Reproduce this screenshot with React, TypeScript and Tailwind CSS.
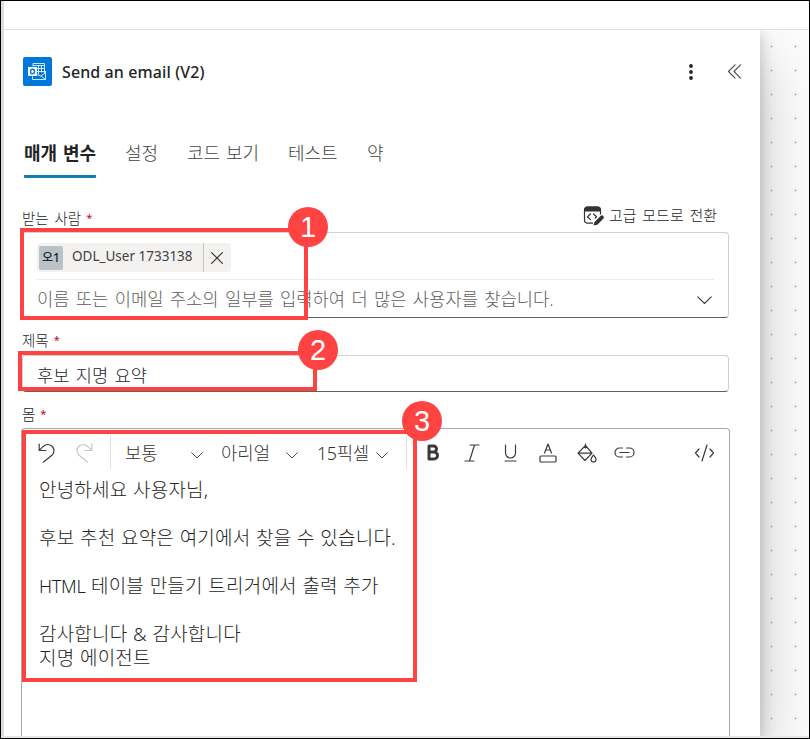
import type { ReactNode } from "react";

const FONT = "font-['Noto_Sans','Noto_Sans_CJK_KR',sans-serif]";

function Chevron({ className = "" }: { className?: string }) {
  return (
    <svg className={className} viewBox="0 0 14 8" fill="none" stroke="#424242" strokeWidth="1.1" strokeLinecap="round" strokeLinejoin="round">
      <path d="M.7.8 7 7 13.3.8" />
    </svg>
  );
}

function Label({ children, className = "" }: { children: ReactNode; className?: string }) {
  return (
    <div className={`flex items-center whitespace-nowrap text-[14.5px] font-light leading-5 text-[#242424] [word-spacing:2px] ${className}`}>
      {children}
      <span className="ml-[5px] text-[11px] font-normal text-[#b10e1c]">*</span>
    </div>
  );
}

function Marker({ n, box, badge }: { n: number; box: string; badge: string }) {
  return (
    <>
      <div className={`absolute z-20 border-4 border-[#ff4343] ${box}`} />
      <div className={`absolute z-20 flex size-10 items-center justify-center rounded-full bg-[#ff4343] font-['Liberation_Sans',sans-serif] text-[29px] leading-none text-white ${badge}`}>
        {n}
      </div>
    </>
  );
}

function OutlookIcon() {
  return (
    <svg className="size-[29px] shrink-0" viewBox="0 0 29 29" fill="none">
      <rect width="29" height="29" rx="2" fill="#0078d9" />
      <g stroke="#fff" strokeWidth=".8">
        <path d="M10 9.500v-3h11.500v10M10 8.500h11.500M14 11.500h7.500M14 14.500h7.500M15.500 8.500v9M18.500 8.500v7M9.500 19.500v3h13V14.500M21.500 14.500h1.500M14 17.500l4 1.500 4.500-3.500M18 19l4.500 3.500" />
      </g>
      <rect x="5" y="10" width="9" height="9" fill="#fff" />
      <ellipse cx="9.500" cy="14.500" rx="2" ry="2.200" stroke="#0078d9" strokeWidth="1.400" />
    </svg>
  );
}

function SwitchIcon() {
  return (
    <svg className="h-5 w-[22px]" viewBox="0 0 22 20" fill="none">
      <path d="M10 17.200H4.500A3 3 0 0 1 1.500 14.200V4A3 3 0 0 1 4.500 1h10a3 3 0 0 1 3 3v4.500" stroke="#333" strokeWidth="1.200" />
      <path d="M1 5.500V4A3.500 3.500 0 0 1 4.500.500h10A3.500 3.500 0 0 1 18 4v1.500z" fill="#333" />
      <path d="m7.500 8-3 2.800 3 2.800M10.500 8l3 2.800-1.200 1.200" stroke="#333" strokeWidth="1.200" strokeLinecap="round" strokeLinejoin="round" />
      <path d="m10.500 19.500 1-3.500 6-6a1.900 1.900 0 0 1 2.800 2.700l-6 6z" fill="#333" />
    </svg>
  );
}

const I = { fill: "none", stroke: "#3b3a39", strokeWidth: 1.2, strokeLinecap: "round", strokeLinejoin: "round" } as const;

function Toolbar() {
  return (
    <div className="flex h-[47px] items-center text-[17.8px] font-light text-[#323130]">
      <svg className="ml-4 h-5 w-[18px]" viewBox="0 0 18 20" {...I}>
        <path d="M1.200 1v6.500H8M1.500 7.200 5.500 3.200a6.200 6.200 0 0 1 9 8.500L5.500 19" />
      </svg>
      <svg className="ml-[19px] h-5 w-[18px]" viewBox="0 0 18 20" {...I} stroke="#c8c6c4">
        <path d="M16.800 1v6.500H10M16.500 7.200 12.500 3.200a6.200 6.200 0 0 0-9 8.500L12.500 19" />
      </svg>
      <div className="ml-[17px] h-[33px] w-px bg-[#e1dfdd]" />
      <span className="ml-[14px] mt-[2px] w-[66px]">보통</span>
      <Chevron className="mt-[5px] w-3" />
      <span className="ml-[18px] mt-[2px] w-[65px] whitespace-nowrap">아리얼</span>
      <Chevron className="mt-[5px] w-3" />
      <span className="ml-[19px] mt-[2px] w-[59px] whitespace-nowrap tracking-[-0.3px]">15픽셀</span>
      <Chevron className="mt-[5px] w-3" />
      <div className="ml-[18px] h-[33px] w-px bg-[#e1dfdd]" />
      <svg className="ml-[20px] h-[17px] w-[13px]" viewBox="0 0 13 17" {...I} strokeWidth={3}>
        <path d="M2 2h4.500a3 3 0 0 1 0 6H2zM2 8h5a3.500 3.500 0 0 1 0 7H2z" />
      </svg>
      <svg className="ml-[24px] h-[18px] w-4" viewBox="0 0 16 18" {...I}>
        <path d="M6 1h9M1 17h9M10.500 1l-5 16" />
      </svg>
      <svg className="ml-[24px] h-[18px] w-[13px]" viewBox="0 0 13 18" {...I}>
        <path d="M1.500 1v8a5 5 0 0 0 10 0V1M1 17h11" />
      </svg>
      <svg className="ml-[22px] h-[20px] w-[18px]" viewBox="0 0 18 20" {...I}>
        <path d="m5.500 10 3.500-9 3.500 9M6.700 7h4.600" />
        <rect x="1" y="13" width="16" height="6" rx="1" />
      </svg>
      <svg className="ml-[19px] h-5 w-[21px]" viewBox="0 0 21 20" {...I}>
        <path d="M9.500 1v4M9.500 2.500 2 10.200l7 7.300 7-7.300zM2 10.200h14M17.500 12c-1.500 2-2.500 3-2.500 4.500a2.500 2.500 0 0 0 5 0c0-1.500-1-2.500-2.500-4.500z" />
      </svg>
      <svg className="ml-[17px] h-[11px] w-[21px]" viewBox="0 0 21 11" {...I}>
        <path d="M8.500 1H5.500a4.500 4.500 0 0 0 0 9h3M12.500 1h3a4.500 4.500 0 0 1 0 9h-3M6 5.500h9" />
      </svg>
      <svg className="ml-auto mr-[14px] h-[18px] w-[21px]" viewBox="0 0 21 18" {...I}>
        <path d="M5 5 1.500 9 5 13M16 5l3.500 4L16 13M13 1 8 17" />
      </svg>
    </div>
  );
}

export default function App() {
  return (
    <div className={`relative flex h-[739px] w-[810px] flex-col overflow-hidden border border-black bg-white ${FONT}`}>
      <div className="flex min-h-0 flex-1 border-b-2 border-[#e6e6e6]">
        <div className="w-[3px] shrink-0 bg-[#e1dcdc]" />
        <div className="flex min-w-0 flex-1 flex-col">
          <header className="h-[29px] shrink-0 border-b border-[#e0e0e0]" />
          <div className="flex min-h-0 flex-1 overflow-hidden">
            <main className="relative z-10 flex w-[756px] shrink-0 flex-col bg-white pl-[18px] shadow-[0_25.6px_57.6px_rgba(0,0,0,0.22),0_4.8px_14.4px_rgba(0,0,0,0.22)]">
              <div className="mt-[27px] flex h-[29px] items-center pl-px">
                <OutlookIcon />
                <h1 className="ml-[10px] font-['Noto_Sans',sans-serif] text-[16px] font-medium tracking-[0.1px] text-[#242424]">Send an email (V2)</h1>
                <svg className="ml-auto h-4 w-1" viewBox="0 0 4 16" fill="#242424">
                  <circle cx="2" cy="2" r="1.900" />
                  <circle cx="2" cy="8" r="1.900" />
                  <circle cx="2" cy="14" r="1.900" />
                </svg>
                <svg className="ml-[35px] mr-[18px] h-[15px] w-[14px]" viewBox="0 0 14 15" {...I} stroke="#555">
                  <path d="M7 .800.500 7.500l6.500 6.700M12.500.800 6 7.500l6.500 6.700" />
                </svg>
              </div>

              <nav className="mt-[49px] flex h-[43px] gap-[29px] whitespace-nowrap pl-[2px] text-[18px] font-light leading-[36px] text-[#424242] [word-spacing:1.2px]">
                <span className="w-[72px] rounded-[1px] border-b-[3px] border-[#0f7fb0] font-bold text-[#242424]">매개 변수</span>
                <span className="w-[33px]">설정</span>
                <span className="w-[72px]">코드 보기</span>
                <span className="w-[50px]">테스트</span>
                <span>약</span>
              </nav>

              <div className="mt-[26px] flex h-[28px] items-start justify-between pr-[43px]">
                <Label className="mt-[4px]">받는 사람</Label>
                <div className="mt-[2px] flex items-center gap-[4px] whitespace-nowrap text-[15px] font-light leading-5 text-[#242424] [word-spacing:1.8px]">
                  <SwitchIcon />
                  <span className="-mt-[2px]">고급 모드로 전환</span>
                </div>
              </div>
              <section className="h-[86px] w-[707px] rounded-[4px] border border-[#d1d1d1] border-b-[#616161] px-[14px] pt-[10px]">
                <div className="flex h-[29px] w-[194px] items-center rounded-[4px] bg-[#f3f2f1]">
                  <span className="ml-[2px] flex size-6 items-center justify-center rounded-[2px] bg-[#b9c3c7] text-[12px] font-medium text-[#242424]">오1</span>
                  <span className="-mt-[3px] ml-[9px] w-[131px] whitespace-nowrap text-[13.5px] text-[#424242]">ODL_User 1733138</span>
                  <span className="h-full w-px bg-[#c8c6c4]" />
                  <svg className="ml-[7px] size-3" viewBox="0 0 12 12" {...I}>
                    <path d="m.600.600 10.800 10.800M11.400.600.600 11.400" />
                  </svg>
                </div>
                <div className="mt-[7px] flex h-[40px] items-center justify-between border-t border-[#edebe9]">
                  <span className="whitespace-nowrap text-[17.7px] font-light text-[#605e5c] [word-spacing:1.7px]">이름 또는 이메일 주소의 일부를 입력하여 더 많은 사용자를 찾습니다.</span>
                  <Chevron className="mr-[2px] mt-px w-[15px]" />
                </div>
              </section>

              <Label className="mt-[12px]">제목</Label>
              <section className="mt-[5px] flex h-[37px] w-[707px] items-center rounded-[4px] border border-[#d1d1d1] border-b-[#616161] pl-[14px] pt-[3px] text-[17.6px] font-light text-[#242424] [word-spacing:1.8px]">
                후보 지명 요약
              </section>

              <Label className="mt-[12px]">몸</Label>
              <section className="-ml-px mt-[4px] w-[709px] flex-1 rounded-t-[4px] border border-b-0 border-[#a9a9a9]">
                <Toolbar />
                <div className="whitespace-pre pl-[17px] pt-[2px] text-[19px] font-light leading-6 tracking-[0.2px] text-[#242424] [word-spacing:0.5px]">
                  <p>안녕하세요 사용자님,</p>
                  <p className="mt-6">후보 추천 요약은 여기에서 찾을 수 있습니다.</p>
                  <p className="mt-6"><span className="text-[18px] tracking-[-0.3px]">HTML</span> 테이블 만들기 트리거에서 출력 추가</p>
                  <p className="mt-6">감사합니다 &amp; 감사합니다</p>
                  <p>지명 에이전트</p>
                </div>
              </section>
            </main>
            <aside className="flex-1 bg-[#fcfcfc]" />
          </div>
        </div>
      </div>

      <div className="absolute left-[758px] top-[33px] z-10 h-[702px] w-12 bg-[radial-gradient(circle_at_12.5px_12.5px,#a0a0a0_0.7px,transparent_1.2px)] bg-[size:24px_24px]" />
      <Marker n={1} box="left-[19px] top-[227px] h-[92px] w-[288px]" badge="left-[287px] top-[206px]" />
      <Marker n={2} box="left-[17px] top-[350px] h-[40px] w-[299px]" badge="left-[297px] top-[329px]" />
      <Marker n={3} box="left-[21px] top-[429px] h-[252px] w-[395px]" badge="left-[401px] top-[400px]" />
    </div>
  );
}
